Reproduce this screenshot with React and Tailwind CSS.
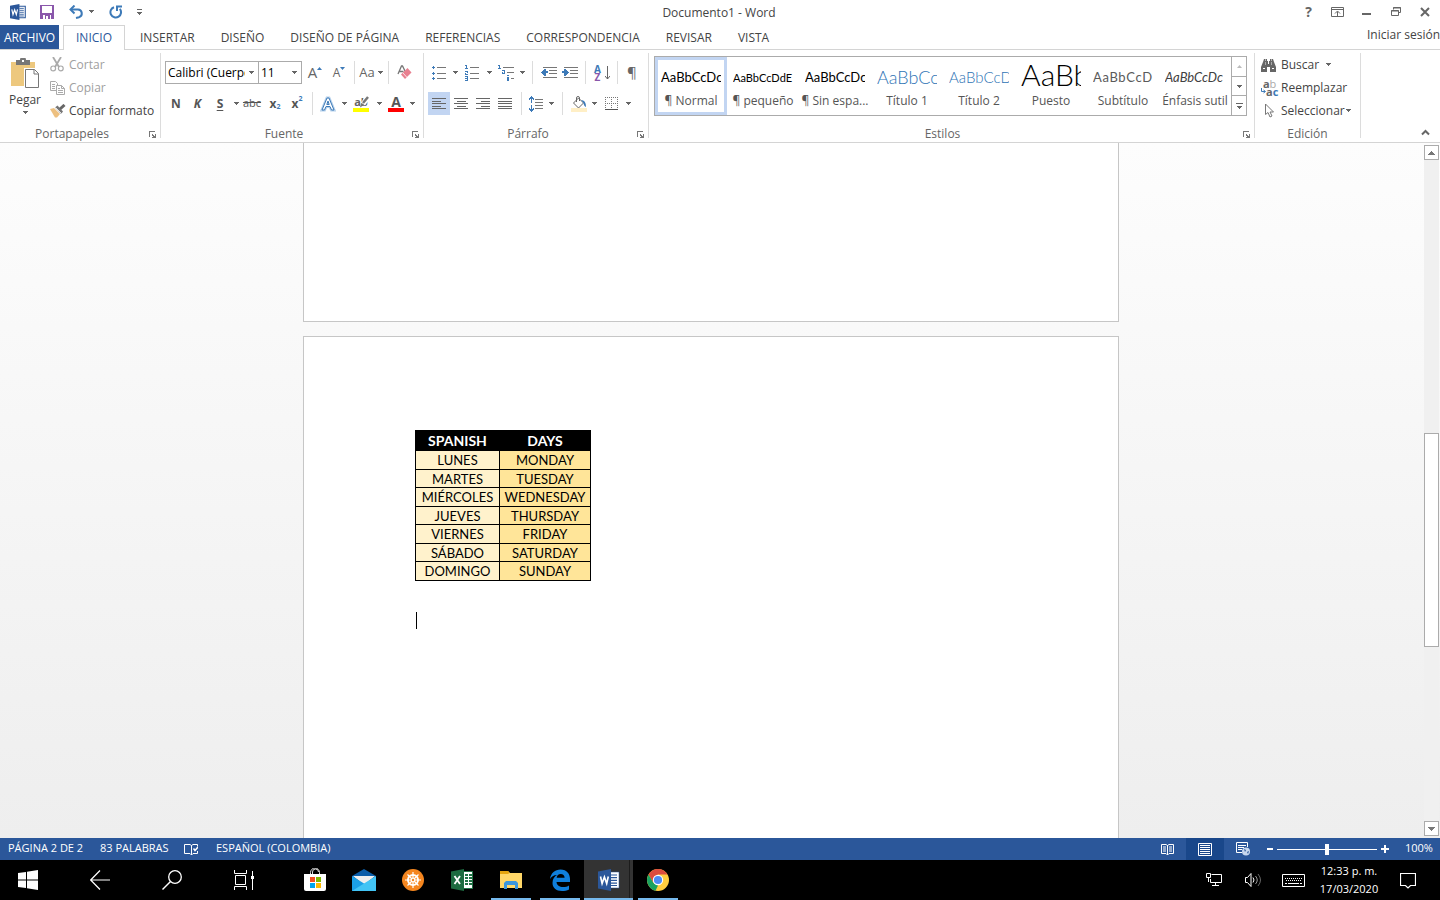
import clsx from 'clsx';

const tabs = [
  'INSERTAR',
  'DISEÑO',
  'DISEÑO DE PÁGINA',
  'REFERENCIAS',
  'CORRESPONDENCIA',
  'REVISAR',
  'VISTA',
];

const estilos = [
  { name: '¶ Normal', sample: 'AaBbCcDc', cls: 'text-[13px] text-black', selected: true },
  { name: '¶ pequeño', sample: 'AaBbCcDdE', cls: 'text-[11px] text-black' },
  { name: '¶ Sin espa...', sample: 'AaBbCcDc', cls: 'text-[13px] text-black' },
  { name: 'Título 1', sample: 'AaBbCc', cls: 'text-[18px] font-light text-[#2e74b5]' },
  { name: 'Título 2', sample: 'AaBbCcD', cls: 'text-[15px] font-light text-[#2e74b5]' },
  { name: 'Puesto', sample: 'AaBb', cls: 'pb-[6px] text-[30px] font-light text-black' },
  { name: 'Subtítulo', sample: 'AaBbCcD', cls: 'text-[13px] tracking-wider text-[#5a5a5a]' },
  { name: 'Énfasis sutil', sample: 'AaBbCcDc', cls: 'text-[13px] italic text-[#404040]' },
];

const dias = [
  ['LUNES', 'MONDAY'],
  ['MARTES', 'TUESDAY'],
  ['MIÉRCOLES', 'WEDNESDAY'],
  ['JUEVES', 'THURSDAY'],
  ['VIERNES', 'FRIDAY'],
  ['SÁBADO', 'SATURDAY'],
  ['DOMINGO', 'SUNDAY'],
];

function Svg({ w = 16, h = 16, children, ...rest }) {
  return (
    <svg width={w} height={h} viewBox={`0 0 ${w} ${h}`} fill="none" className="shrink-0" aria-hidden="true" {...rest}>
      {children}
    </svg>
  );
}

function Arrow({ color = '#666' }) {
  return (
    <Svg w={5} h={3} shapeRendering="crispEdges">
      <path d="M0 0h5v1H0zM1 1h3v1H1zM2 2h1v1H2z" fill={color} />
    </Svg>
  );
}

function Cell({ label, className = 'w-[22px]', children }) {
  return (
    <button type="button" aria-label={label} className={clsx('flex h-[23px] shrink-0 items-center justify-center', className)}>
      {children}
    </button>
  );
}

function Sep({ className = 'w-2' }) {
  return (
    <span className={clsx('flex h-[23px] shrink-0 justify-center', className)}>
      <span className="w-px bg-[#dcdcdc]" />
    </span>
  );
}

function Launcher({ label }) {
  return (
    <button type="button" aria-label={label} className="absolute right-1 bottom-0">
      <Svg w={7} h={7} shapeRendering="crispEdges">
        <path d="M0 0h6v1H1v5H0zM3 3h1v1h1v1h1V3h1v4H3V6h1V5H3z" fill="#777" />
      </Svg>
    </button>
  );
}

function Group({ title, launcher, className, children }) {
  return (
    <section className={clsx('relative flex shrink-0 flex-col border-r border-[#dcdcdc]', className)}>
      <div className="flex-1">{children}</div>
      <h2 className={clsx('h-[9px] text-center leading-[9px] text-[#666]', launcher && 'pr-4')}>{title}</h2>
      {launcher && <Launcher label={`Opciones de ${title}`} />}
    </section>
  );
}

/* Iconos */

function WordLogo({ w = 16, dark }) {
  return (
    <svg width={w} height={w} viewBox="0 0 22 22" aria-hidden="true">
      <path d="M11 3h10v16H11z" fill="#fff" stroke="#2b579a" strokeWidth={dark ? 0.5 : 1.5} />
      <path d="M13 6h6M13 8.7h6M13 11.4h6M13 14.1h6M13 16.5h6" stroke="#2b579a" strokeWidth="1.2" />
      <path d="M0 2.5 13 0v22L0 19.5z" fill="#2b579a" />
      <path d="m2.500 7.500 1.600 7 2.300-6.600 2.300 6.600 1.600-7" fill="none" stroke="#fff" strokeWidth="1.6" />
    </svg>
  );
}

function SaveIcon() {
  return (
    <Svg w={14} h={14} shapeRendering="crispEdges">
      <path d="M0 0h14v14H0z" fill="#8a57ab" />
      <path d="M2 1h10v7H2zM3 10h8v4H3z" fill="#fff" />
      <path d="M5 10h5v4H5z" fill="#8a57ab" />
      <path d="M6 11h2v3H6z" fill="#fff" />
    </Svg>
  );
}

function UndoIcon() {
  return (
    <Svg w={15} h={14}>
      <path d="M2 4.500h7a4 4 0 0 1 1 7.800l-3 .7" stroke="#3d7ab8" strokeWidth="2" />
      <path d="M5.500.5 1.500 4.500l4 4" stroke="#3d7ab8" strokeWidth="2" />
    </Svg>
  );
}

function RedoIcon() {
  return (
    <Svg w={14} h={14}>
      <path d="M5 2.200A5.300 5.300 0 1 0 10.800 3.800" stroke="#3d7ab8" strokeWidth="2" />
      <path d="M8 6V1.500h5" stroke="#3d7ab8" strokeWidth="2" />
    </Svg>
  );
}

function PasteIcon() {
  return (
    <Svg w={29} h={31}>
      <path d="M0 4h24v24H0z" fill="#edc87e" />
      <path d="M5 2h4a3 3 0 0 1 6 0h4v5H5z" fill="#777" />
      <path d="M11 2h2v2h-2z" fill="#fff" />
      <path d="M13 10h11l5 5v16H13z" fill="#fff" />
      <path d="M14.500 11.500h9l4 4v14h-13zM23 11.500V16h4.500" stroke="#777" />
    </Svg>
  );
}

function CutIcon() {
  return (
    <Svg w={14} h={15}>
      <path d="m3 0 6 10M11 0 5 10" stroke="#aaa" strokeWidth="1.8" />
      <circle cx="3.2" cy="11.4" r="2.4" stroke="#aaa" strokeWidth="1.2" />
      <circle cx="10.8" cy="11.4" r="2.4" stroke="#aaa" strokeWidth="1.2" />
    </Svg>
  );
}

function CopyIcon() {
  return (
    <Svg w={15} h={14}>
      <path d="M.5.5h5l2 2v7h-7zM2 3.500h3M2 5.500h3M2 7.500h3" stroke="#aaa" />
      <path d="M6.500 4.500h5l3 3v6h-8z" fill="#fff" stroke="#aaa" />
      <path d="M11.500 4.500v3h3M8 7.500h2M8 9.500h5M8 11.500h5" stroke="#aaa" />
    </Svg>
  );
}

function BrushIcon() {
  return (
    <Svg w={16} h={14}>
      <path d="m0 5 4-1 6 6-3 3.500H5z" fill="#edc080" />
      <path d="m5 3.500 2.500-2 5.500 6-2 2.500z" fill="#777" />
      <path d="m10 5 4.500-4" stroke="#666" strokeWidth="3" />
      <path d="m5.500 3.500 6 6" stroke="#fff" strokeWidth=".8" />
    </Svg>
  );
}

function EraserIcon() {
  return (
    <Svg w={15} h={15}>
      <path d="m1 9 3.500-8h1L8 6M2.500 6.500h4" stroke="#777" strokeWidth="1.300" />
      <path d="m10.500 3 4 4.500-6.500 6.500-4-4.500z" fill="#e88090" />
      <path d="m6 8 4 4.500" stroke="#fff" strokeWidth=".8" />
    </Svg>
  );
}

function HighlightIcon() {
  return (
    <span className="relative flex h-4 w-4 flex-col border-b-4 border-[#ff0] text-[11px] leading-[11px] font-bold text-[#666]">
      ab
      <span className="absolute top-0 left-1">
        <Svg w={12} h={12}>
          <path d="m11 1-5 7" stroke="#fff" strokeWidth="5" />
          <path d="m11 1-5 6" stroke="#777" strokeWidth="2.500" />
          <path d="m4 7 3 2-4 2.500z" fill="#777" />
        </Svg>
      </span>
    </span>
  );
}

function BulletsIcon() {
  return (
    <Svg w={14} h={14} shapeRendering="crispEdges">
      <path d="M0 1h3v1H0zM0 7h3v1H0zM0 12h3v1H0zM1 0h1v3H1zM1 6h1v3H1zM1 11h1v3H1z" fill="#3d7ab8" />
      <path d="M5 1h9v1H5zM5 7h9v1H5zM5 12h9v1H5z" fill="#777" />
    </Svg>
  );
}

function NumberingIcon() {
  return (
    <Svg w={14} h={16} shapeRendering="crispEdges">
      <path d="M0 0h2v3h1v1H0V3h1V1H0zM0 6h3v2H1v1h2v1H0V8h2V7H0zM0 11h3v5H0v-1h2v-1H0v-1h2v-1H0z" fill="#3d7ab8" />
      <path d="M5 2h9v1H5zM5 8h9v1H5zM5 13h9v1H5z" fill="#777" />
    </Svg>
  );
}

function MultilevelIcon() {
  return (
    <Svg w={17} h={16} shapeRendering="crispEdges">
      <path d="M0 0h2v3h1v1H0V3h1V1H0zM4 5h3v4H4V7h2V6H4zM9 10h2v1H9zM9 12h2v4H9z" fill="#3d7ab8" />
      <path d="M5 7h1v1H5z" fill="#fff" />
      <path d="M5 2h11v1H5zM9 7h7v1H9zM13 13h3v1h-3z" fill="#777" />
    </Svg>
  );
}

function IndentIcon({ out }) {
  return (
    <Svg w={16} h={11} shapeRendering="crispEdges">
      <path d="M2 0h14v1H2zM8 3h8v1H8zM8 6h8v1H8zM2 10h14v1H2z" fill="#777" />
      {out ? (
        <path d="M0 5h1V4h1V3h1V2h2v2h2v2H5v3H3V8H2V7H1V6H0z" fill="#3d7ab8" />
      ) : (
        <path d="M7 5H6V4H5V3H4V2H2v2H0v2h2v3h2V8h1V7h1V6h1z" fill="#3d7ab8" />
      )}
    </Svg>
  );
}

function SortIcon() {
  return (
    <span className="flex items-center gap-1">
      <span className="flex flex-col text-[10px] leading-2 font-bold">
        <span className="text-[#3d7ab8]">A</span>
        <span className="text-[#8a57ab]">Z</span>
      </span>
      <Svg w={5} h={14}>
        <path d="M2.500 0v13M0 10l2.500 3L5 10" stroke="#666" />
      </Svg>
    </span>
  );
}

const alignPaths = {
  left: 'M0 0h14v1H0zM0 3h9v1H0zM0 5h14v1H0zM0 8h9v1H0zM0 10h14v1H0z',
  center: 'M0 0h14v1H0zM3 3h9v1H3zM0 5h14v1H0zM3 8h9v1H3zM0 10h14v1H0z',
  right: 'M0 0h14v1H0zM5 3h9v1H5zM0 5h14v1H0zM5 8h9v1H5zM0 10h14v1H0z',
  justify: 'M0 0h14v1H0zM0 3h14v1H0zM0 5h14v1H0zM0 8h14v1H0zM0 10h14v1H0z',
};

function AlignIcon({ kind }) {
  return (
    <Svg w={14} h={11} shapeRendering="crispEdges">
      <path d={alignPaths[kind]} fill="#666" />
    </Svg>
  );
}

function LineSpacingIcon() {
  return (
    <Svg w={14} h={16} shapeRendering="crispEdges">
      <path d="M2 0h1v1h1v1h1v2H4V3H3v4H2V3H1v1H0V2h1V1h1zM2 9h1v4h1v-1h1v2H4v1H3v1H2v-1H1v-1H0v-2h1v1h1z" fill="#3d7ab8" />
      <path d="M6 3h8v1H6zM6 6h8v1H6zM6 9h8v1H6zM6 12h8v1H6z" fill="#777" />
    </Svg>
  );
}

function BucketIcon() {
  return (
    <Svg w={16} h={16}>
      <path d="M0 12h16v4H0z" fill="#ffefc6" />
      <path d="m2.500 7 5-5 5 5-5 5z" fill="#fff" stroke="#666" />
      <path d="M5.500 6V2q0-1.500 1.500-1.500T8.500 2v3" stroke="#666" />
      <path d="M10 4q5 0 5 7-2-.5-2.500-4z" fill="#3d7ab8" />
    </Svg>
  );
}

function BordersIcon() {
  return (
    <Svg w={13} h={13} shapeRendering="crispEdges">
      <path d="M0 .5h13M0 6.500h13M.5 0v12M6.500 0v12M12.500 0v12" stroke="#777" strokeDasharray="1 1" />
      <path d="M0 12.500h13" stroke="#555" />
    </Svg>
  );
}

function FindIcon() {
  return (
    <Svg w={15} h={14}>
      <path d="M3 1h3v2h1v3h1V3h1V1h3l1 3 2 5v5H9V9H6v5H0V9l2-5z" fill="#666" />
      <path d="M4 2h1M10 2h1M2 10.500h2M11 10.500h2" stroke="#fff" />
      <path d="M4.500 4v3M10.500 4v3" stroke="#aaa" />
    </Svg>
  );
}

function ReplaceIcon() {
  return (
    <span className="flex flex-col text-[11px] leading-[8px]">
      <span><b className="text-[#666]">a</b><span className="text-[#aaa]">b</span></span>
      <span className="flex">
        <Svg w={5} h={7}>
          <path d="M.5 0v3.500H4M2.500 2l2 1.500-2 1.500" stroke="#3d7ab8" />
        </Svg>
        <b className="text-[#666]">a</b><b className="text-[#3d7ab8]">c</b>
      </span>
    </span>
  );
}

function CursorIcon() {
  return (
    <Svg w={9} h={15}>
      <path d="M.5 1v10.500L3 9.500l2 4.500 2-1-2-4h3.500z" stroke="#777" />
    </Svg>
  );
}

function TitleBar() {
  return (
    <header className="grid h-[25px] shrink-0 grid-cols-[1fr_auto_1fr] items-center">
      <div className="flex items-center pb-[3px] pl-[10px]">
        <Cell label="Word" className="w-4"><WordLogo /></Cell>
        <Cell label="Guardar" className="ml-[10px] w-[22px]"><SaveIcon /></Cell>
        <Cell label="Deshacer" className="ml-[7px] w-[22px]"><UndoIcon /></Cell>
        <Cell label="Más acciones para deshacer" className="w-2"><Arrow /></Cell>
        <Cell label="Rehacer" className="ml-[10px] w-[22px]"><RedoIcon /></Cell>
        <Cell label="Personalizar barra" className="ml-[10px] w-[5px]">
          <Svg w={5} h={6} shapeRendering="crispEdges">
            <path d="M0 0h5v1H0zM0 3h5v1H0zM1 4h3v1H1zM2 5h1v1H2z" fill="#666" />
          </Svg>
        </Cell>
      </div>
      <h1 className="pr-[2px] text-[#444]">Documento1 - Word</h1>
      <div className="flex justify-end pr-px pb-[3px]">
        <Cell label="Ayuda" className="w-[29px] text-[14px] font-bold text-[#666]">?</Cell>
        <Cell label="Opciones de presentación" className="w-[29px]">
          <Svg w={13} h={10}>
            <path d="M.5.5h12v9H.5zM.5 2.500h12M6.500 9V4.500M4 6.500l2.500-2.500L9 6.500" stroke="#666" />
          </Svg>
        </Cell>
        <Cell label="Minimizar" className="w-[29px]">
          <Svg w={9} h={6}><path d="M0 4h9v2H0z" fill="#666" /></Svg>
        </Cell>
        <Cell label="Restaurar" className="w-[29px]">
          <Svg w={10} h={9}>
            <path d="M2.500 2.500v-2h7v5h-2M.5 3.500h7v5h-7zM2 1h8M0 4h8" stroke="#666" />
          </Svg>
        </Cell>
        <Cell label="Cerrar" className="w-[29px]">
          <Svg w={10} h={10}><path d="m1 1 8 8M9 1 1 9" stroke="#666" strokeWidth="2" /></Svg>
        </Cell>
      </div>
    </header>
  );
}

function TabBar() {
  return (
    <nav className="flex h-[25px] shrink-0 items-stretch border-b border-[#d4d4d4] text-[#444]">
      <button type="button" className="w-[59px] bg-[#2b579a] pt-px text-white">ARCHIVO</button>
      <button type="button" className="mr-[2px] -mb-px ml-1 w-[62px] border border-b-0 border-[#d4d4d4] bg-white text-[#2b579a]">INICIO</button>
      {tabs.map(t => (
        <button key={t} type="button" className="px-[13px] pt-px whitespace-nowrap">{t}</button>
      ))}
      <a href="#" className="ml-auto self-start leading-5 whitespace-nowrap">Iniciar sesión</a>
    </nav>
  );
}

function ClipboardGroup() {
  return (
    <Group title="Portapapeles" launcher className="w-[161px]">
      <div className="flex">
        <button type="button" className="flex w-[50px] shrink-0 flex-col items-center gap-[3px] pt-[5px]">
          <PasteIcon />
          <span className="leading-4">Pegar</span>
          <Arrow />
        </button>
        <div className="flex flex-col">
          <button type="button" className="flex h-[23px] items-center gap-[5px] text-[#a0a0a0]"><CutIcon />Cortar</button>
          <button type="button" className="flex h-[23px] items-center gap-1 text-[#a0a0a0]"><CopyIcon />Copiar</button>
          <button type="button" className="flex h-[23px] items-center gap-[3px] whitespace-nowrap"><BrushIcon />Copiar formato</button>
        </div>
      </div>
    </Group>
  );
}

function FontGroup() {
  return (
    <Group title="Fuente" launcher className="w-[263px] px-1">
      <div className="flex pt-2">
        <label className="relative flex h-[23px] w-[94px] items-center border border-[#ababab]">
          <select aria-label="Fuente" className="w-[79px] appearance-none overflow-hidden pl-[2px] text-black">
            <option>Calibri (Cuerpo)</option>
          </select>
          <span className="absolute right-1"><Arrow /></span>
        </label>
        <label className="relative -ml-px flex h-[23px] w-11 items-center border border-[#ababab]">
          <select aria-label="Tamaño de fuente" className="w-6 appearance-none pl-[2px] text-black">
            <option>11</option>
          </select>
          <span className="absolute right-1"><Arrow /></span>
        </label>
        <Cell label="Aumentar tamaño" className="w-[26px] text-[15px] text-[#666]">
          A<span className="mb-2"><Svg w={5} h={3}><path d="M2.500 0 5 3H0z" fill="#3d7ab8" /></Svg></span>
        </Cell>
        <Cell label="Disminuir tamaño" className="w-[22px] text-[#666]">
          A<span className="mb-2"><Svg w={5} h={3}><path d="M2.500 3 5 0H0z" fill="#3d7ab8" /></Svg></span>
        </Cell>
        <Sep className="w-2" />
        <Cell label="Cambiar mayúsculas" className="w-[26px] gap-[3px] text-[13px] text-[#666]">Aa<Arrow /></Cell>
        <Sep className="w-2" />
        <Cell label="Borrar formato" className="w-6"><EraserIcon /></Cell>
      </div>
      <div className="flex pt-2 text-[#555]">
        <Cell label="Negrita"><b>N</b></Cell>
        <Cell label="Cursiva" className="w-[21px]"><b className="italic">K</b></Cell>
        <Cell label="Subrayado" className="w-6"><b className="underline underline-offset-2">S</b></Cell>
        <Cell label="Más subrayados" className="w-2"><Arrow /></Cell>
        <Cell label="Tachado" className="w-6"><span className="text-[11px] line-through">abc</span></Cell>
        <Cell label="Subíndice"><b>x</b><b className="mt-2 text-[7px] text-[#3d7ab8]">2</b></Cell>
        <Cell label="Superíndice"><b>x</b><b className="mb-2 text-[7px] text-[#3d7ab8]">2</b></Cell>
        <Sep />
        <Cell label="Efectos de texto" className="w-6">
          <Svg w={16} h={16}>
            <path d="M2 14 7 2h2l5 12h-2.500L10 10.500H6L4.500 14zM6.800 8.500h2.400L8 5z" stroke="#b7d2ec" strokeWidth="3" />
            <path d="M2 14 7 2h2l5 12h-2.500L10 10.500H6L4.500 14zM6.800 8.500h2.400L8 5z" fill="#fff" stroke="#3d7ab8" />
          </Svg>
        </Cell>
        <Cell label="Más efectos" className="w-2"><Arrow /></Cell>
        <Cell label="Resaltado" className="w-[26px]"><HighlightIcon /></Cell>
        <Cell label="Más resaltados" className="w-[10px]"><Arrow /></Cell>
        <Cell label="Color de fuente" className="w-6">
          <b className="h-4 w-4 border-b-4 border-[#f00] text-[14px] leading-3">A</b>
        </Cell>
        <Cell label="Más colores" className="w-2"><Arrow /></Cell>
      </div>
    </Group>
  );
}

function ParagraphGroup() {
  return (
    <Group title="Párrafo" launcher className="w-[225px] px-1">
      <div className="flex pt-2">
        <Cell label="Viñetas"><BulletsIcon /></Cell>
        <Cell label="Más viñetas" className="w-[10px]"><Arrow /></Cell>
        <Cell label="Numeración" className="w-6"><NumberingIcon /></Cell>
        <Cell label="Más numeración" className="w-[10px]"><Arrow /></Cell>
        <Cell label="Lista multinivel" className="w-6"><MultilevelIcon /></Cell>
        <Cell label="Más listas" className="w-2"><Arrow /></Cell>
        <Sep className="w-3" />
        <Cell label="Disminuir sangría"><IndentIcon out /></Cell>
        <Cell label="Aumentar sangría" className="w-5"><IndentIcon /></Cell>
        <Sep className="w-[10px]" />
        <Cell label="Ordenar" className="w-6"><SortIcon /></Cell>
        <Sep className="w-[6px]" />
        <Cell label="Mostrar todo" className="w-6 text-[15px] text-[#666]">¶</Cell>
      </div>
      <div className="flex pt-2">
        <Cell label="Alinear a la izquierda" className="w-[22px] bg-[#c2d5f2]"><AlignIcon kind="left" /></Cell>
        <Cell label="Centrar"><AlignIcon kind="center" /></Cell>
        <Cell label="Alinear a la derecha"><AlignIcon kind="right" /></Cell>
        <Cell label="Justificar"><AlignIcon kind="justify" /></Cell>
        <Sep className="w-[10px]" />
        <Cell label="Interlineado" className="w-5"><LineSpacingIcon /></Cell>
        <Cell label="Más interlineado" className="w-[10px]"><Arrow /></Cell>
        <Sep className="w-3" />
        <Cell label="Sombreado"><BucketIcon /></Cell>
        <Cell label="Más sombreados" className="w-2"><Arrow /></Cell>
        <Cell label="Bordes" className="w-[26px]"><BordersIcon /></Cell>
        <Cell label="Más bordes" className="w-2"><Arrow /></Cell>
      </div>
    </Group>
  );
}

function StylesGroup() {
  return (
    <Group title="Estilos" launcher className="pr-[7px] pl-[5px]">
      <div className="mt-[3px] flex h-[60px] border border-[#ababab]">
        {estilos.map(s => (
          <button
            key={s.name}
            type="button"
            className={clsx('flex w-[72px] flex-col items-center border-[3px] pt-1', s.selected ? 'border-[#c2d5f2]' : 'border-transparent')}
          >
            <span className={clsx('flex h-7 w-[60px] items-center overflow-hidden font-[Lato,sans-serif] leading-none whitespace-nowrap', s.cls)}>{s.sample}</span>
            <span className="leading-[22px] whitespace-nowrap text-[#555]">{s.name}</span>
          </button>
        ))}
        <div className="flex w-[15px] flex-col divide-y divide-[#ababab] border-l border-[#ababab]">
          <button type="button" aria-label="Subir" className="flex flex-1 items-center justify-center">
            <Svg w={5} h={3}><path d="M2.500 0 5 3H0z" fill="#bbb" /></Svg>
          </button>
          <button type="button" aria-label="Bajar" className="flex flex-1 items-center justify-center"><Arrow /></button>
          <button type="button" aria-label="Más estilos" className="flex flex-1 flex-col items-center justify-center gap-[2px]">
            <span className="h-px w-[7px] bg-[#666]" />
            <Arrow />
          </button>
        </div>
      </div>
    </Group>
  );
}

function EditGroup() {
  return (
    <Group title="Edición" className="w-[106px] px-[6px]">
      <div className="flex flex-col whitespace-nowrap">
        <button type="button" className="flex h-[23px] items-center">
          <span className="flex w-5 shrink-0"><FindIcon /></span>Buscar<span className="ml-[7px]"><Arrow /></span>
        </button>
        <button type="button" className="flex h-[23px] items-center">
          <span className="flex w-5 shrink-0"><ReplaceIcon /></span>Reemplazar
        </button>
        <button type="button" className="flex h-[23px] items-center">
          <span className="flex w-5 shrink-0 pl-1"><CursorIcon /></span>Seleccionar<span className="ml-px"><Arrow /></span>
        </button>
      </div>
    </Group>
  );
}

function Ribbon() {
  return (
    <div className="flex h-[93px] shrink-0 border-b border-[#d4d4d4] pt-[3px] pb-1 text-[#444]">
      <ClipboardGroup />
      <FontGroup />
      <ParagraphGroup />
      <StylesGroup />
      <EditGroup />
      <button type="button" aria-label="Contraer la cinta" className="mr-[10px] ml-auto self-end">
        <Svg w={9} h={9}><path d="m1 5.500 3.500-3.500L8 5.500" stroke="#666" strokeWidth="2" /></Svg>
      </button>
    </div>
  );
}

function Scrollbar() {
  return (
    <div className="flex w-4 flex-col pt-[2px] pr-px pb-[2px]">
      <button type="button" aria-label="Desplazar arriba" className="flex h-[15px] items-center justify-center border border-[#ababab] bg-white">
        <Svg w={7} h={4} shapeRendering="crispEdges"><path d="M3 0h1v1h1v1h1v1h1v1H0V3h1V2h1V1h1z" fill="#777" /></Svg>
      </button>
      <div className="flex-[274] bg-[#f0f0f0]" />
      <div className="flex-[212] border border-[#ababab] bg-white" />
      <div className="flex-[175] bg-[#f0f0f0]" />
      <button type="button" aria-label="Desplazar abajo" className="flex h-[15px] items-center justify-center border border-[#ababab] bg-white">
        <Svg w={7} h={4} shapeRendering="crispEdges"><path d="M0 0h7v1H6v1H5v1H4v1H3V3H2V2H1V1H0z" fill="#777" /></Svg>
      </button>
    </div>
  );
}

function Document() {
  return (
    <div className="flex min-h-0 flex-1 bg-linear-to-b from-[#fdfdfd] to-[#eeeeee]">
      <main className="flex min-w-0 flex-1 flex-col items-center gap-[14px] overflow-hidden pr-[2px]">
        <div className="h-[179px] w-[816px] max-w-full shrink-0 border border-t-0 border-[#c6c6c6] bg-white" />
        <article className="w-[816px] max-w-full flex-1 border border-b-0 border-[#c6c6c6] bg-white px-[111px] pt-[93px] font-[Lato,sans-serif] text-black">
          <table className="border-collapse text-center text-[13px] leading-[16px]">
            <thead>
              <tr className="h-5 bg-black text-[14px] leading-[18px] text-white">
                <th className="w-[84px] border border-black p-0">SPANISH</th>
                <th className="w-[91px] border border-black p-0">DAYS</th>
              </tr>
            </thead>
            <tbody>
              {dias.map(([es, en]) => (
                <tr key={es} className="odd:h-[19px] even:h-[18px]">
                  <td className="border border-black bg-[#fff2cc] p-0">{es}</td>
                  <td className="border border-black bg-[#ffe599] p-0">{en}</td>
                </tr>
              ))}
            </tbody>
          </table>
          <div className="mt-[31px] ml-px h-[17px] w-px bg-black" />
        </article>
      </main>
      <Scrollbar />
    </div>
  );
}

function StatusBar() {
  return (
    <footer className="flex h-[22px] shrink-0 items-center bg-[#2b579a] pl-2 text-[11px] text-white">
      <span className="w-[92px] pb-[2px]">PÁGINA 2 DE 2</span>
      <span className="w-[84px] pb-[2px]">83 PALABRAS</span>
      <button type="button" aria-label="Revisión" className="w-8">
        <Svg w={14} h={13}>
          <path d="M7.500 2.500 6 1.500H.5v9H6l1.500 1.500zM7.500 12V2.500L9 1.500h4.500v2M13.500 8v2.500H9L7.500 12" stroke="#fff" />
          <path d="m9.500 5.500 1.500 2 3-3.500" stroke="#fff" strokeWidth="1.500" />
        </Svg>
      </button>
      <span className="pb-[2px]">ESPAÑOL (COLOMBIA)</span>
      <div className="ml-auto flex h-full items-center">
        <Cell label="Modo de lectura" className="w-[38px]">
          <Svg w={13} h={13}>
            <path d="M6.500 2.500 5 1.500H.5v9H5l1.500 1.500L8 10.500h4.500v-9H8zM6.500 2v10" stroke="#fff" />
            <path d="M2 4h3M2 6h3M2 8h3M8 4h3M8 6h3M8 8h3" stroke="#fff" />
          </Svg>
        </Cell>
        <button type="button" aria-label="Diseño de impresión" className="flex h-full w-[38px] items-center justify-center bg-[#19478a]">
          <Svg w={14} h={13}>
            <path d="M.5.5h13v12H.5zM2 2.500h10M2 4.500h10M2 6.500h10M2 8.500h10M2 10.500h10" stroke="#fff" />
          </Svg>
        </button>
        <Cell label="Diseño web" className="w-[38px]">
          <Svg w={14} h={14}>
            <path d="M6 10.500H.5V.5h11V5M2 3.500h8M2 5.500h6M2 7.500h4" stroke="#fff" />
            <circle cx="10" cy="9.500" r="4" fill="#c9d8ee" />
            <path d="m8 7 2 1-1 2zM11 10l2-1-1 3z" fill="#2b579a" />
          </Svg>
        </Cell>
        <button type="button" aria-label="Alejar" className="ml-[5px]"><Svg w={6} h={2}><path d="M0 0h6v2H0z" fill="#fff" /></Svg></button>
        <input
          type="range"
          aria-label="Zoom"
          defaultValue="50"
          className="mx-1 h-3 w-[100px] appearance-none bg-[linear-gradient(white,white)] bg-[length:100%_1px] bg-center bg-no-repeat [&::-webkit-slider-thumb]:h-[11px] [&::-webkit-slider-thumb]:w-1 [&::-webkit-slider-thumb]:appearance-none [&::-webkit-slider-thumb]:bg-white"
        />
        <button type="button" aria-label="Acercar"><Svg w={8} h={8}><path d="M3 0h2v3h3v2H5v3H3V5H0V3h3z" fill="#fff" /></Svg></button>
        <span className="w-[51px] pb-[2px] pl-4">100%</span>
      </div>
    </footer>
  );
}

function TaskButton({ label, open, active, children }) {
  return (
    <button
      type="button"
      aria-label={label}
      className={clsx('relative flex w-[49px] items-center justify-center', active && 'bg-[#333]')}
    >
      {children}
      {active && <span className="absolute inset-y-0 right-[3px] w-px bg-[#1c1c1c]" />}
      {open && <span className={clsx('absolute bottom-0 h-[2px] bg-[#76b9ed]', active ? 'inset-x-0' : 'right-1 left-[5px]')} />}
    </button>
  );
}

function Taskbar() {
  return (
    <div className="flex h-10 shrink-0 bg-black text-white">
      <button type="button" aria-label="Inicio" className="flex w-16 items-center justify-center pr-2">
        <Svg w={20} h={20}><path d="m0 3 8-1v7.500H0zM9 1.800 20 0v9.500H9zM0 10.500h8V18l-8-1zM9 10.500h11V20L9 18.300z" fill="#fff" /></Svg>
      </button>
      <button type="button" aria-label="Atrás" className="flex w-[72px] items-center justify-center">
        <Svg w={20} h={20}><path d="M20 10H1M10 .5.700 10l9.300 9.500" stroke="#fff" strokeWidth="1.200" /></Svg>
      </button>
      <button type="button" aria-label="Buscar" className="flex w-[72px] items-center justify-center">
        <Svg w={20} h={20}>
          <circle cx="13" cy="7" r="6.300" stroke="#fff" strokeWidth="1.300" />
          <path d="M8.500 11.500.5 19.500" stroke="#fff" strokeWidth="1.400" />
        </Svg>
      </button>
      <button type="button" aria-label="Vista de tareas" className="flex w-[72px] items-center justify-center">
        <Svg w={20} h={20}>
          <path d="M.5 0v3.500h12V0M1.500 5.500h10v9h-10zM.5 20v-3.500h12V20M18.500 1v19" stroke="#fff" />
          <path d="M17 6h3v3h-3z" fill="#fff" />
        </Svg>
      </button>
      <div className="ml-[10px] flex">
        <TaskButton label="Tienda">
          <Svg w={24} h={24}>
            <path d="M7.500 7V4.500a4.500 4.500 0 0 1 9 0V7M9.500 7V4a3 3 0 0 1 6 0" stroke="#ddd" />
            <path d="M1 6h22v15q0 2-2 2H3q-2 0-2-2z" fill="#fff" />
            <path d="M7 9h5v5H7z" fill="#f25022" />
            <path d="M13 9h5v5h-5z" fill="#7fba00" />
            <path d="M7 15h5v5H7z" fill="#00a4ef" />
            <path d="M13 15h5v5h-5z" fill="#ffb900" />
          </Svg>
        </TaskButton>
        <TaskButton label="Correo">
          <Svg w={24} h={24}>
            <path d="M0 8 12 1l12 7v3H0z" fill="#0a5ca8" />
            <path d="M1 8h22l-11 9z" fill="#eee" />
            <path d="m0 8 24 15H0z" fill="#1ba0e8" />
            <path d="M24 8 0 23h24z" fill="#42c4f5" />
          </Svg>
        </TaskButton>
        <TaskButton label="Timón">
          <Svg w={24} h={24}>
            <circle cx="12" cy="12" r="11" fill="#f5861f" />
            <circle cx="12" cy="12" r="5" stroke="#fff" strokeWidth="2" />
            <path d="M12 4v16M4 12h16M6.500 6.500l11 11M17.500 6.500l-11 11" stroke="#fff" strokeWidth="1.200" />
            <circle cx="12" cy="12" r="2.500" fill="#fff" />
            <circle cx="12" cy="12" r="1.200" fill="#f5861f" />
          </Svg>
        </TaskButton>
        <TaskButton label="Excel">
          <Svg w={22} h={22}>
            <path d="M12 2.500h9.500v17H12z" fill="#fff" stroke="#217346" />
            <path d="M14 5h3v2h-3zM18 5h3v2h-3zM14 8h3v2h-3zM18 8h3v2h-3zM14 11h3v2h-3zM18 11h3v2h-3zM14 14h3v2h-3zM18 14h3v2h-3z" fill="#217346" />
            <path d="M0 2.500 13 0v22L0 19.500z" fill="#1d6b40" />
            <path d="m3.500 7 5.500 8M9 7l-5.500 8" stroke="#fff" strokeWidth="1.800" />
          </Svg>
        </TaskButton>
        <TaskButton label="Explorador" open>
          <Svg w={22} h={20}>
            <path d="M0 1h8l2 2h12v15H0z" fill="#ffd768" />
            <path d="M0 1h8l1.500 2L8 4H0z" fill="#e5a50f" />
            <path d="M4 19v-6l2-2h10l2 2v6h-3v-4H7v4z" fill="#3b96dc" />
          </Svg>
        </TaskButton>
        <TaskButton label="Edge" open>
          <Svg w={22} h={22}>
            <path d="M1 10C2 4 6 .5 11.500.5 18 .5 21 5 21 10v3H7.500c.3 3.500 3 5 6.500 5 2.500 0 4.500-.7 6-1.600v4c-2 1-4.500 1.600-7 1.600C7 22 3.500 18.500 3.500 14c0-4 2-6.500 4.500-8C4.500 6 2.300 8 1 10m6.600-1.200h8C15.600 6.500 14 5 11.700 5S8 6.500 7.600 8.800" fill="#0f7fdc" />
          </Svg>
        </TaskButton>
        <TaskButton label="Word" open active><WordLogo w={22} dark /></TaskButton>
        <TaskButton label="Chrome" open>
          <Svg w={22} h={22}>
            <circle cx="11" cy="11" r="11" fill="#ffcd40" />
            <path d="M1.500 5.500A11 11 0 0 1 20.500 5.500H11L6.300 13.700z" fill="#dc4c3f" />
            <path d="M1.500 5.500 6.300 13.700 11 16.500l-2.500 5.200A11 11 0 0 1 1.500 5.500" fill="#1aa260" />
            <circle cx="11" cy="11" r="5.200" fill="#fff" />
            <circle cx="11" cy="11" r="4.100" fill="#4c8bf5" />
          </Svg>
        </TaskButton>
      </div>
      <div className="ml-auto flex items-center">
        <Cell label="Red" className="w-[38px]">
          <Svg w={16} h={14}>
            <path d="M5.500 1.500h10v8h-11V6M9.500 9.500v3M6 12.500h7M.5.500h4v4h-4zM2.500 4.500V9" stroke="#fff" />
          </Svg>
        </Cell>
        <Cell label="Volumen" className="w-[40px]">
          <Svg w={17} h={14}>
            <path d="M.5 4.500h2l3.500-4v13l-3.500-4h-2z" stroke="#fff" />
            <path d="M8 4.500q2 2.500 0 5" stroke="#fff" />
            <path d="M10.500 3q3.500 4 0 8" stroke="#999" />
            <path d="M13 1q5 6 0 12" stroke="#666" />
          </Svg>
        </Cell>
        <Cell label="Teclado" className="w-[41px]">
          <Svg w={23} h={13}>
            <path d="M.5.5h22v12H.5z" stroke="#fff" />
            <path d="M3 4.500h17M4 6.500h16" stroke="#fff" strokeDasharray="1 1" />
            <path d="M3 9.500h2M6 9.500h11M18 9.500h2" stroke="#fff" />
          </Svg>
        </Cell>
        <div className="w-[70px] text-center text-[11px] leading-[18px] whitespace-nowrap">
          <div>12:33 p. m.</div>
          <div>17/03/2020</div>
        </div>
        <Cell label="Notificaciones" className="mr-2 w-12">
          <Svg w={16} h={17}><path d="M.5 1.500h15v12h-5L8 16l-2.500-2.500h-5z" stroke="#fff" strokeWidth="1.200" /></Svg>
        </Cell>
      </div>
    </div>
  );
}

export default function App() {
  return (
    <div className="flex h-screen flex-col overflow-hidden bg-white font-['Open_Sans','Noto_Sans',sans-serif] text-[12px]">
      <TitleBar />
      <TabBar />
      <Ribbon />
      <Document />
      <StatusBar />
      <Taskbar />
    </div>
  );
}
